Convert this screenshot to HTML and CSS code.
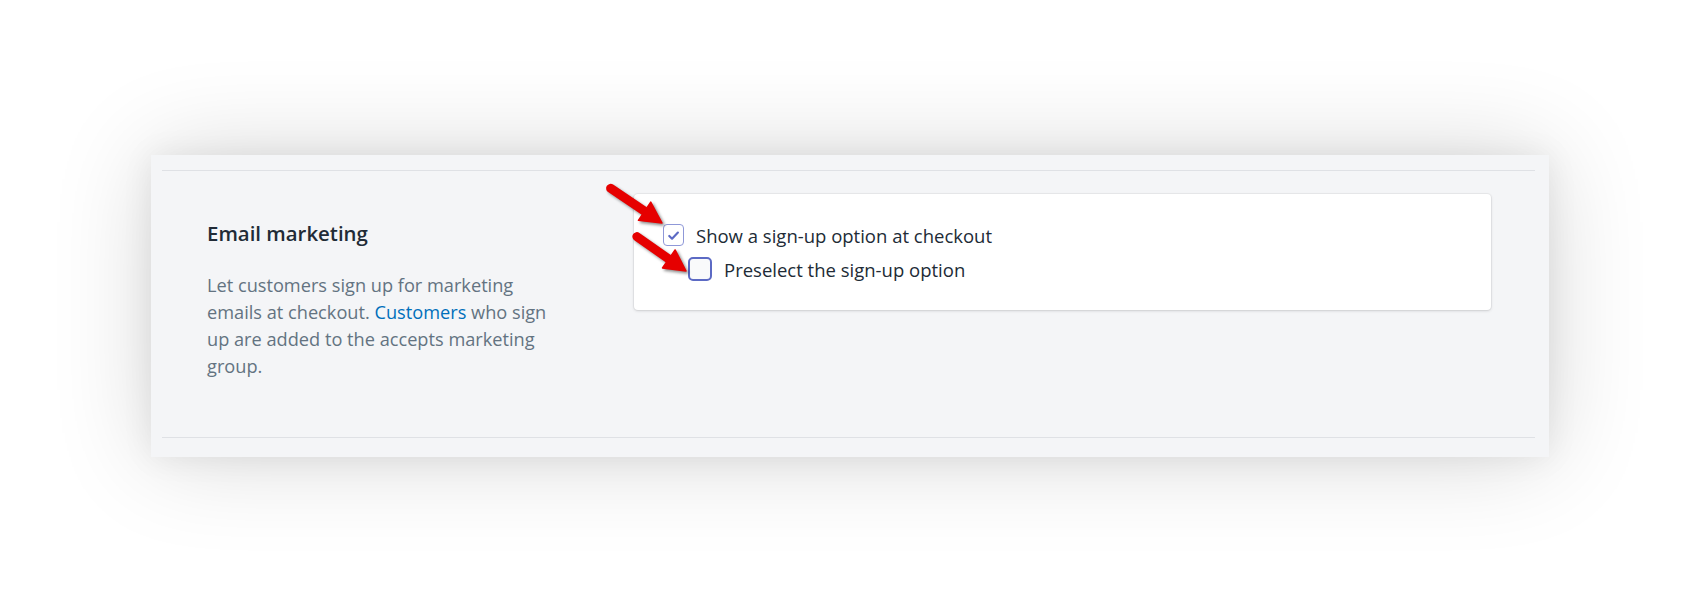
FILE: index.html
```html
<!DOCTYPE html>
<html>
  <head>
    <title>Checkout settings</title>
    <link rel="stylesheet" href="styles.css">
  </head>
  <body>
    <div class="shot">
      <div class="section">
        <div class="annotation">
          <h2 class="annotation-title">Email marketing</h2>
          <p class="annotation-text">Let customers sign up for marketing emails at checkout. <a href="#">Customers</a> who sign up are added to the accepts marketing group.</p>
        </div>
        <div class="card">
          <label class="choice">
            <span class="box checked">
              <svg viewBox="0 0 20 20" width="17" height="17"><path d="M5 10.5l3.3 3.3 6.9-7.3" fill="none" stroke="#5c6ac4" stroke-width="2.5" stroke-linecap="round" stroke-linejoin="round"/></svg>
            </span>
            <span class="choice-label">Show a sign-up option at checkout</span>
          </label>
          <label class="choice nested">
            <span class="box focused"></span>
            <span class="choice-label">Preselect the sign-up option</span>
          </label>
        </div>
      </div>
    </div>

    <svg class="arrows" width="1700" height="614" viewBox="0 0 1700 614">
      <g transform="translate(662 223) rotate(34)">
        <line x1="-62" y1="0" x2="-16" y2="0" stroke="#e60000" stroke-width="9" stroke-linecap="round"/>
        <polygon points="0,0 -21,-11 -21,11" fill="#e60000" stroke="#e60000" stroke-width="1.5" stroke-linejoin="round"/>
      </g>
      <g transform="translate(686 271) rotate(35)">
        <line x1="-60" y1="0" x2="-16" y2="0" stroke="#e60000" stroke-width="9" stroke-linecap="round"/>
        <polygon points="0,0 -21,-11 -21,11" fill="#e60000" stroke="#e60000" stroke-width="1.5" stroke-linejoin="round"/>
      </g>
    </svg>
  </body>
</html>
```

FILE: styles.css
```css
body { margin: 0; background: #fff; font-family: "Open Sans", "Noto Sans", Arial, sans-serif; position: relative; height: 614px; overflow: hidden; }

.shot { margin: 155px 0 0 151px; width: 1398px; height: 302px; box-sizing: border-box; padding: 15px 14px 0 11px; background: #f4f5f7; box-shadow: 0 0 100px rgba(0, 0, 0, 0.16), 0 0 30px rgba(0, 0, 0, 0.07); }

.section { display: grid; grid-template-columns: 350px 857px; column-gap: 77px; height: 268px; box-sizing: border-box; padding: 23px 0 0 45px; border-top: 1px solid #dfe1e5; border-bottom: 1px solid #dfe1e5; }

.annotation-title { margin: 25px 0 0; font-size: 20.4px; line-height: 28px; font-weight: 600; color: #212b36; }
.annotation-text { margin: 25px 0 0; font-size: 18.2px; line-height: 27px; color: #637381; }
.annotation-text a { color: #006fbb; text-decoration: none; }

.card { align-self: start; background: #fff; border-radius: 4px; padding: 24px 26px 24px 29px; box-shadow: 0 0 0 1px rgba(63, 63, 68, 0.05), 0 1px 3px rgba(63, 63, 68, 0.18); }

.choice { display: flex; align-items: center; height: 34px; font-size: 18.5px; color: #212b36; }
.choice.nested { padding-left: 25px; }
.choice-label { margin-left: 12px; }

.box { display: flex; align-items: center; justify-content: center; width: 21px; height: 22px; box-sizing: border-box; border: 1px solid #8f98d8; border-radius: 4px; background: #fff; }
.box.focused { width: 24px; height: 24px; border: 2px solid #5c6ac4; border-radius: 5px; background: #f9fafb; }

.arrows { position: absolute; left: 0; top: 0; pointer-events: none; filter: drop-shadow(2px 2px 1.5px rgba(0, 0, 0, 0.45)); }
```
